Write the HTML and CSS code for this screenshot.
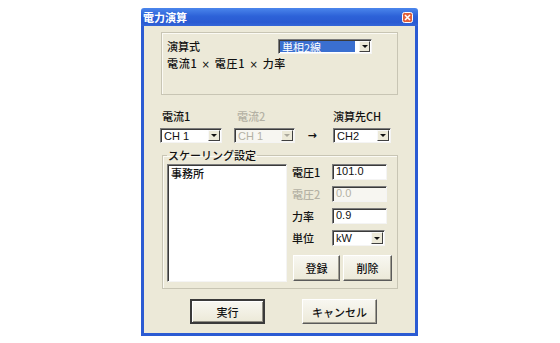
FILE: index.html
```html
<!DOCTYPE html>
<html lang="ja">
<head>
<meta charset="utf-8">
<title>電力演算</title>
<link rel="stylesheet" href="styles.css">
</head>
<body>
<div class="dialog">
  <div class="titlebar">
    <span class="title">電力演算</span>
    <span class="close"><svg width="11" height="11" viewBox="0 0 11 11"><rect x="0.5" y="0.5" width="10" height="10" rx="2" fill="#e2603a" stroke="#fff" stroke-width="1"/><path d="M3 3 L8 8 M8 3 L3 8" stroke="#fff" stroke-width="1.6"/></svg></span>
  </div>
  <div class="body">
    <div class="group1">
      <div class="frow">
        <span class="flabel">演算式</span>
        <div class="select sel-formula"><span class="val selected">単相2線</span><span class="arrow"><i></i></span></div>
      </div>
      <div class="formula">電流1 <span class="times">×</span> 電圧1 <span class="times">×</span> 力率</div>
    </div>

    <div class="chrow">
      <div class="chcol c1">
        <div class="lbl">電流1</div>
        <div class="select"><span class="val">CH 1</span><span class="arrow"><i></i></span></div>
      </div>
      <div class="chcol c2 disabled">
        <div class="lbl">電流2</div>
        <div class="select"><span class="val">CH 1</span><span class="arrow"><i></i></span></div>
      </div>
      <div class="rarrow">→</div>
      <div class="chcol c3">
        <div class="lbl">演算先CH</div>
        <div class="select"><span class="val">CH2</span><span class="arrow"><i></i></span></div>
      </div>
    </div>

    <fieldset class="scale">
      <legend>スケーリング設定</legend>
      <div class="listbox">事務所</div>
      <div class="side">
        <div class="prow"><span class="plabel">電圧1</span><span class="input">101.0</span></div>
        <div class="prow disabled"><span class="plabel">電圧2</span><span class="input">0.0</span></div>
        <div class="prow"><span class="plabel">力率</span><span class="input">0.9</span></div>
        <div class="prow"><span class="plabel">単位</span><div class="select sel-unit"><span class="val">kW</span><span class="arrow"><i></i></span></div></div>
        <div class="btns">
          <span class="btn b-reg">登録</span>
          <span class="btn b-del">削除</span>
        </div>
      </div>
    </fieldset>

    <div class="bottom">
      <span class="btn b-run default">実行</span>
      <span class="btn b-cancel">キャンセル</span>
    </div>
  </div>
</div>
</body>
</html>
```

FILE: styles.css
```css
html, body {
  margin: 0;
  padding: 0;
  background: #ffffff;
}
body {
  font-family: "Noto Sans CJK JP", "Noto Sans", sans-serif;
  font-size: 11px;
  font-weight: 500;
  color: #111111;
}
.dialog {
  margin: 8px 0 0 141px;
  width: 277px;
  box-sizing: border-box;
}
.titlebar {
  height: 18px;
  background: linear-gradient(#4b86ec, #2d62d8 45%, #2a5ad2 80%, #3466d8);
  display: flex;
  align-items: center;
  justify-content: space-between;
  padding: 0 5px 0 2px;
  border-radius: 3px 3px 0 0;
}
.title {
  color: #ffffff;
  font-weight: bold;
  font-size: 11px;
  line-height: 12px;
}
.close {
  display: flex;
  width: 11px;
  height: 11px;
}
.body {
  background: #ece9d8;
  border: 3px solid #2b5bd3;
  border-top: 0;
  height: 301px;
  padding-top: 6px;
  box-sizing: content-box;
}
.body > * { box-sizing: border-box; }

/* group 1 */
.group1 {
  margin-left: 17px;
  width: 237px;
  height: 63px;
  border: 1px solid #c8c5b4;
  box-shadow: inset 1px 1px 0 #fbfaf4;
  padding: 6px 0 0 5px;
}
.frow {
  display: flex;
  align-items: center;
  height: 14px;
}
.flabel {
  width: 111px;
  line-height: 12px;
}
.formula {
  margin-top: 4px;
  line-height: 13px;
  letter-spacing: 0.7px;
}
.times {
  font-family: "DejaVu Sans", sans-serif;
  font-size: 10px;
  color: #111;
  margin: 0 1px;
}

/* select */
.select {
  display: flex;
  align-items: stretch;
  background: #ffffff;
  border: 1px solid;
  border-color: #7c7c7c #f4f4f4 #f4f4f4 #7c7c7c;
  box-shadow: inset 1px 1px 0 #3a3a3a;
  box-sizing: border-box;
  height: 15px;
  padding: 1px;
}
.select .val {
  flex: 1;
  font-family: "Liberation Sans", Arial, sans-serif;
  font-size: 11px;
  font-weight: normal;
  line-height: 12px;
  padding-left: 2px;
  color: #111;
}
.select .val.selected {
  font-family: "Noto Sans CJK JP", sans-serif;
  background: #3a6fd0;
  color: #ffffff;
  flex: 0 0 73px;
  margin-right: 4px;
}
.select .arrow {
  width: 12px;
  background: #ece9d8;
  border: 1px solid;
  border-color: #f8f8f8 #404040 #404040 #f8f8f8;
  box-sizing: border-box;
  display: flex;
  align-items: center;
  justify-content: center;
}
.select .arrow i {
  width: 0;
  height: 0;
  border-left: 3px solid transparent;
  border-right: 3px solid transparent;
  border-top: 3px solid #111;
}
.sel-formula {
  width: 94px;
}

/* channel row */
.chrow {
  display: flex;
  margin-top: 15px;
  margin-left: 16px;
}
.chcol .lbl {
  line-height: 13px;
  height: 13px;
  margin-bottom: 5px;
}
.c1 { width: 62px; }
.c1 .lbl { padding-left: 2px; }
.c2 { width: 61px; margin-left: 12px; }
.c2 .lbl { padding-left: 3px; }
.c3 { width: 58px; margin-left: 16px; }
.disabled .lbl,
.disabled .val,
.disabled .plabel,
.disabled .input { color: #b4b1a4; }
.disabled .select { background: #f7f6f1; }
.disabled .select .arrow i { border-top-color: #aaa89c; }
.rarrow {
  align-self: flex-end;
  width: 10px;
  margin-left: 12px;
  height: 15px;
  line-height: 15px;
  font-size: 11px;
  font-family: "DejaVu Sans", sans-serif;
  font-weight: bold;
  text-align: center;
}

/* scaling group */
.scale {
  margin: 6px 0 0 18px;
  width: 236px;
  border: 1px solid #c8c5b4;
  box-shadow: inset 1px 1px 0 #fbfaf4;
  padding: 3px 0 6px 4px;
  display: flex;
  min-inline-size: 0;
}
.scale legend {
  padding: 0 1px;
  margin-left: 0;
  line-height: 12px;
  font-size: 11px;
}
.listbox {
  width: 120px;
  height: 118px;
  box-sizing: border-box;
  background: #ffffff;
  border: 1px solid;
  border-color: #7c7c7c #f4f4f4 #f4f4f4 #7c7c7c;
  box-shadow: inset 1px 1px 0 #3a3a3a;
  padding: 2px 3px;
  line-height: 12px;
}
.side {
  margin-left: 5px;
  display: flex;
  flex-direction: column;
  gap: 6px;
}
.prow {
  display: flex;
  align-items: center;
  height: 16px;
}
.plabel {
  width: 40px;
  line-height: 12px;
}
.input {
  width: 55px;
  height: 16px;
  box-sizing: border-box;
  background: #ffffff;
  border: 1px solid;
  border-color: #7c7c7c #f4f4f4 #f4f4f4 #7c7c7c;
  box-shadow: inset 1px 1px 0 #3a3a3a;
  font-family: "Liberation Sans", Arial, sans-serif;
  font-size: 11px;
  font-weight: normal;
  line-height: 13px;
  padding-left: 3px;
}
.prow.disabled .input { background: #f7f6f1; }
.sel-unit {
  width: 53px;
  height: 16px;
}
.btns {
  display: flex;
  gap: 3px;
  margin-top: 3px;
  padding-left: 1px;
}

/* buttons */
.btn {
  display: flex;
  align-items: center;
  justify-content: center;
  box-sizing: border-box;
  background: linear-gradient(#f8f7f1, #ece9d8);
  border: 1px solid;
  border-color: #ffffff #5a5a5a #5a5a5a #ffffff;
  box-shadow: inset -1px -1px 0 #a09e92;
  line-height: 12px;
}
.b-reg { width: 47px; height: 26px; }
.b-del { width: 49px; height: 26px; }
.bottom {
  display: flex;
  margin-top: 10px;
  margin-left: 46px;
  gap: 37px;
}
.b-run, .b-cancel { width: 75px; height: 25px; }
.btn.default {
  border: 2px solid #3a3a3a;
  box-shadow: inset 1px 1px 0 #fff, inset -1px -1px 0 #8f8d82;
}
```
